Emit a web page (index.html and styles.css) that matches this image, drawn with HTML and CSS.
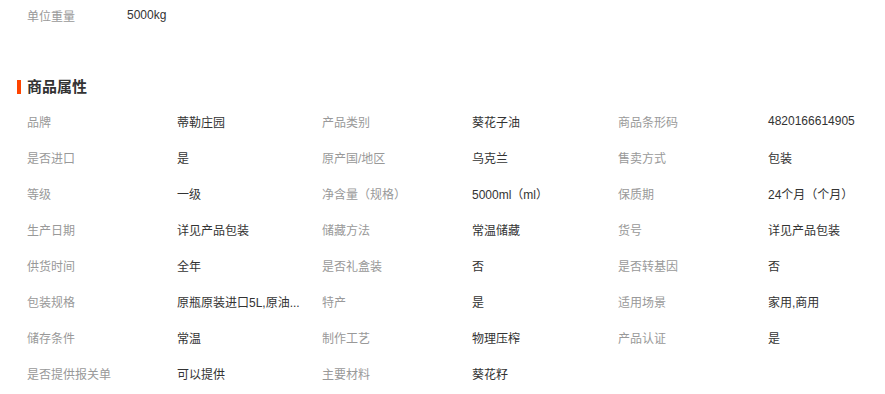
FILE: index.html
```html
<!DOCTYPE html>
<html lang="zh-CN">
<head>
<meta charset="utf-8">
<link rel="stylesheet" href="styles.css">
</head>
<body>
<div class="page">
  <div class="weight-row">
    <span class="weight-label">单位重量</span>
    <span class="weight-value">5000kg</span>
  </div>

  <h2 class="section-title">商品属性</h2>

  <div class="attrs">
    <div class="k">品牌</div><div class="v">蒂勒庄园</div>
    <div class="k">产品类别</div><div class="v">葵花子油</div>
    <div class="k">商品条形码</div><div class="v">4820166614905</div>

    <div class="k">是否进口</div><div class="v">是</div>
    <div class="k">原产国/地区</div><div class="v">乌克兰</div>
    <div class="k">售卖方式</div><div class="v">包装</div>

    <div class="k">等级</div><div class="v">一级</div>
    <div class="k">净含量（规格）</div><div class="v">5000ml（ml）</div>
    <div class="k">保质期</div><div class="v">24个月（个月）</div>

    <div class="k">生产日期</div><div class="v">详见产品包装</div>
    <div class="k">储藏方法</div><div class="v">常温储藏</div>
    <div class="k">货号</div><div class="v">详见产品包装</div>

    <div class="k">供货时间</div><div class="v">全年</div>
    <div class="k">是否礼盒装</div><div class="v">否</div>
    <div class="k">是否转基因</div><div class="v">否</div>

    <div class="k">包装规格</div><div class="v">原瓶原装进口5L,原油...</div>
    <div class="k">特产</div><div class="v">是</div>
    <div class="k">适用场景</div><div class="v">家用,商用</div>

    <div class="k">储存条件</div><div class="v">常温</div>
    <div class="k">制作工艺</div><div class="v">物理压榨</div>
    <div class="k">产品认证</div><div class="v">是</div>

    <div class="k">是否提供报关单</div><div class="v">可以提供</div>
    <div class="k">主要材料</div><div class="v">葵花籽</div>
  </div>
</div>
</body>
</html>
```

FILE: styles.css
```css
html, body {
  margin: 0;
  padding: 0;
  background: #fff;
}

body {
  font-family: "Liberation Sans", "Noto Sans CJK SC", sans-serif;
  font-size: 12px;
  color: #333;
}

.page {
  width: 885px;
}

.weight-row {
  display: flex;
  align-items: center;
  height: 30px;
  padding-left: 27px;
}

.weight-label {
  width: 100px;
  color: #999;
}

.weight-value {
  color: #333;
}

.section-title {
  position: relative;
  margin: 42px 0 1px 0;
  height: 30px;
  line-height: 30px;
  padding-left: 27px;
  font-size: 15px;
  font-weight: bold;
  color: #333;
}

.section-title::before {
  content: "";
  position: absolute;
  left: 17px;
  top: 8px;
  width: 4px;
  height: 14px;
  background: #ff4400;
}

.attrs {
  display: grid;
  grid-template-columns: 150px 145px 150px 146px 150px 1fr;
  grid-auto-rows: 36px;
  padding-left: 27px;
  align-items: center;
}

.k {
  color: #999;
  white-space: nowrap;
}

.v {
  color: #333;
  white-space: nowrap;
}
```
